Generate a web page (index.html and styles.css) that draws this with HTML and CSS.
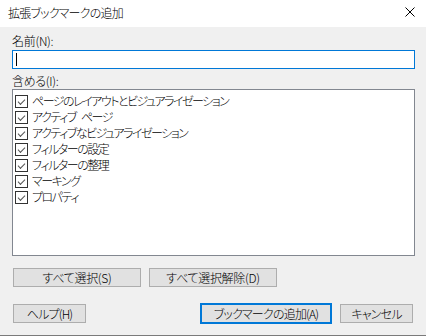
FILE: index.html
```html
<!DOCTYPE html>
<html lang="ja">
<head>
  <meta charset="UTF-8" />
  <title>拡張ブックマークの追加</title>
  <link rel="stylesheet" href="styles.css">
</head>
<body>

<div class="dialog">
    <!-- タイトルバー -->
    <div class="titlebar">
        <span class="title">拡張ブックマークの追加</span>
        <svg class="close" width="10" height="10" viewBox="0 0 10 10">
            <path d="M0.5 0.5 L9.5 9.5 M9.5 0.5 L0.5 9.5" stroke="#000" stroke-width="1" fill="none"/>
        </svg>
    </div>

    <div class="content">
        <div class="label">名前(N):</div>
        <div class="name-input"><span class="caret"></span></div>

        <div class="label label-include">含める(I):</div>
        <div class="list">
            <div class="item"><span class="check"></span>ページのレイアウトとビジュアライゼーション</div>
            <div class="item"><span class="check"></span>アクティブ<span class="gap"> </span>ページ</div>
            <div class="item"><span class="check"></span>アクティブなビジュアライゼーション</div>
            <div class="item"><span class="check"></span>フィルターの設定</div>
            <div class="item"><span class="check"></span>フィルターの整理</div>
            <div class="item"><span class="check"></span>マーキング</div>
            <div class="item"><span class="check"></span>プロパティ</div>
        </div>

        <div class="select-row">
            <button class="btn btn-select">すべて選択(S)</button>
            <button class="btn btn-select">すべて選択解除(D)</button>
        </div>

        <div class="footer">
            <button class="btn btn-help">ヘルプ(H)</button>
            <div class="footer-right">
                <button class="btn btn-default">ブックマークの追加(A)</button>
                <button class="btn btn-cancel">キャンセル</button>
            </div>
        </div>
    </div>
</div>

</body>
</html>
```

FILE: styles.css
```css
/* ダイアログ全体 */
body {
    margin: 0;
    font-family: "Noto Sans CJK JP", "Noto Sans", sans-serif;
    font-size: 12px;
    font-weight: 300;
    font-feature-settings: "palt";
    color: #000;
    background: #fff;
}
.dialog {
    width: 426px;
    height: 336px;
    display: flex;
    flex-direction: column;
}

/* タイトルバー */
.titlebar {
    height: 27px;
    flex: none;
    display: flex;
    align-items: center;
    justify-content: space-between;
    padding: 0 11px 2px 8px;
    box-sizing: border-box;
    background: #fff;
}
.title {
    font-size: 12px;
    line-height: 16px;
    letter-spacing: -0.8px;
}
.close {
    display: block;
    margin-top: -2px;
}

/* 本体 */
.content {
    flex: 1;
    background: #f0f0f0;
    border-bottom: 1px solid #7a7a7a;
    padding: 6px 11px 0 12px;
    display: flex;
    flex-direction: column;
}
.label {
    line-height: 16px;
    height: 16px;
    letter-spacing: -0.3px;
}
.label-include {
    margin-top: 4px;
}
.name-input {
    margin-top: 1px;
    height: 19px;
    box-sizing: border-box;
    border: 1px solid #0078d7;
    background: #fff;
    display: flex;
    align-items: center;
    padding-left: 3px;
}
.caret {
    width: 1px;
    height: 13px;
    background: #000;
}

/* チェックリスト */
.list {
    height: 167px;
    box-sizing: border-box;
    border: 1px solid #828790;
    background: #fff;
    padding: 3px 0 0 1px;
}
.item {
    height: 16px;
    line-height: 16px;
    display: flex;
    align-items: center;
    white-space: pre;
    letter-spacing: -1.5px;
}
.gap {
    display: inline-block;
    width: 5px;
}
.check {
    width: 13px;
    height: 13px;
    box-sizing: border-box;
    border: 1px solid #333;
    background: #fff;
    margin: 0 4px 0 1px;
    position: relative;
    flex: none;
}
.check:after {
    content: "";
    position: absolute;
    left: 2px;
    top: 1px;
    width: 6px;
    height: 3px;
    border-left: 1px solid #555;
    border-bottom: 1px solid #555;
    transform: translate(0, 2px) rotate(-45deg);
}

/* ボタン */
.btn {
    height: 19px;
    box-sizing: border-box;
    border: 1px solid #adadad;
    background: #e1e1e1;
    font-family: inherit;
    font-size: 12px;
    font-weight: 300;
    font-feature-settings: "palt";
    color: #000;
    padding: 0;
    line-height: 16px;
    letter-spacing: -0.3px;
}
.select-row {
    display: flex;
    gap: 8px;
    margin-top: 12px;
    padding-left: 1px;
}
.btn-select {
    width: 128px;
}
.footer {
    display: flex;
    justify-content: space-between;
    align-items: center;
    margin-top: 16px;
    padding-left: 1px;
    padding-right: 2px;
}
.footer-right {
    display: flex;
    align-items: center;
    gap: 8px;
}
.btn-help {
    width: 73px;
    letter-spacing: -0.8px;
}
.btn-default {
    width: 132px;
    height: 21px;
    border: 2px solid #0078d7;
    letter-spacing: -0.8px;
}
.btn-cancel {
    width: 73px;
    letter-spacing: -0.8px;
}
```
